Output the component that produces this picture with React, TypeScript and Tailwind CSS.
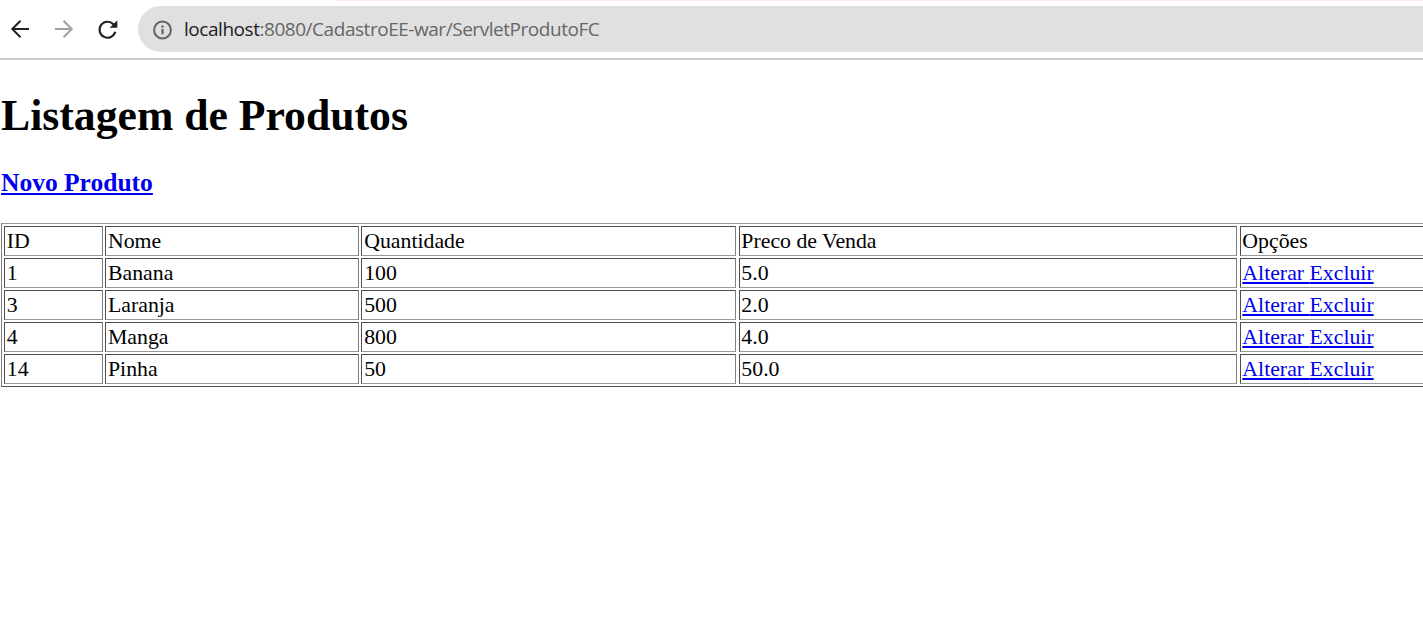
const products = [
  { id: 1, name: "Banana", quantity: 100, price: "5.0" },
  { id: 3, name: "Laranja", quantity: 500, price: "2.0" },
  { id: 4, name: "Manga", quantity: 800, price: "4.0" },
  { id: 14, name: "Pinha", quantity: 50, price: "50.0" },
];

const columns = "grid grid-cols-[99px_254px_375px_498.8px_400px] gap-x-[2.2px] h-[30px]";
const cell =
  "border-t border-l border-r border-b border-t-[#4d4d4d] border-l-[#4d4d4d] border-r-[#808080] border-b-[#999999] pl-[1.8px] leading-[28px] whitespace-nowrap";
const link = "text-[#0000ee] underline decoration-[1.5px] underline-offset-[2px]";

function BrowserBar() {
  return (
    <header className="h-[60px] border-b-2 border-[#cccccc] bg-white">
      <div className="flex h-[6px] items-start">
        <div className="ml-[336px] h-px flex-1 bg-[#ffece4]" />
      </div>
      <div className="flex h-[46px] items-center">
        <svg className="ml-[8px] h-6 w-6 shrink-0" viewBox="0 0 24 24" fill="none" stroke="#202124" strokeWidth="2">
          <path d="M21 12H4.5M12.5 3.8L4.3 12l8.2 8.2" />
        </svg>
        <svg className="ml-[20px] h-6 w-6 shrink-0" viewBox="0 0 24 24" fill="none" stroke="#a0a0a0" strokeWidth="2">
          <path d="M3 12h16.5M11.5 3.8l8.2 8.2-8.2 8.2" />
        </svg>
        <svg className="ml-[20px] h-6 w-6 shrink-0" viewBox="0 0 24 24">
          <path d="M19.3 14.8A8 8 0 1 1 17.4 7.2L19.5 9.3" fill="none" stroke="#202124" strokeWidth="2.1" />
          <path d="M21.3 3.2v7.6h-7.6z" fill="#202124" />
        </svg>
        <div className="ml-[18px] flex h-[46px] flex-1 items-center rounded-l-full bg-[#e0e0e0] pl-[14px]">
          <svg className="h-[21px] w-[21px] shrink-0" viewBox="0 0 21 21">
            <circle cx="10.5" cy="11" r="8.4" fill="none" stroke="#5f6368" strokeWidth="2" />
            <path d="M9.4 9.9h2.2v5.3H9.4zM9.4 6.6h2.2v2.1H9.4z" fill="#5f6368" />
          </svg>
          <div className="ml-[11px] whitespace-nowrap font-['Open_Sans',sans-serif] text-[19px] tracking-[-0.46px] text-[#666666]">
            <span className="text-[#202124]">localhost</span>:8080/CadastroEE-war/ServletProdutoFC
          </div>
        </div>
      </div>
    </header>
  );
}

export default function App() {
  return (
    <div className="h-[633px] w-full overflow-hidden bg-white font-['Liberation_Serif',serif] text-[21.8px] text-black">
      <BrowserBar />
      <main className="pl-px">
        <h1 className="pt-[30px] text-[43.7px] leading-[50px] font-bold">Listagem de Produtos</h1>
        <h3 className="mt-[28px] text-[25.5px] leading-[30px] font-bold">
          <a href="#" className={link}>Novo Produto</a>
        </h3>
        <div className="mt-[25px] flex h-[164px] w-[1640px] flex-col gap-[2px] border border-t-[#999999] border-r-[#4d4d4d] border-b-[#4d4d4d] border-l-[#808080] pt-[2px] pl-[2px]">
          <div className={columns}>
            <div className={cell}>ID</div>
            <div className={cell}>Nome</div>
            <div className={cell}>Quantidade</div>
            <div className={cell}>Preco de Venda</div>
            <div className={cell}>Opções</div>
          </div>
          {products.map((product) => (
            <div key={product.id} className={columns}>
              <div className={cell}>{product.id}</div>
              <div className={cell}>{product.name}</div>
              <div className={cell}>{product.quantity}</div>
              <div className={cell}>{product.price}</div>
              <div className={cell}>
                <a href="#" className={link}>Alterar </a>
                <a href="#" className={link}>Excluir</a>
              </div>
            </div>
          ))}
        </div>
      </main>
    </div>
  );
}
